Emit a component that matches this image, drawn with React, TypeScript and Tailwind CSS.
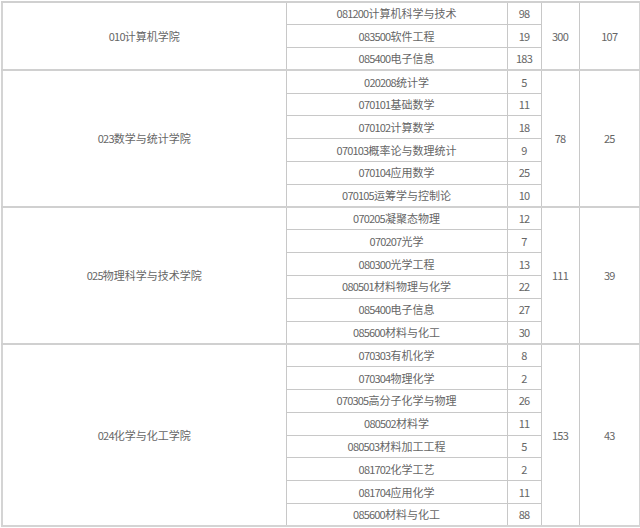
type Major = [string, string, number];

interface College {
  code: string;
  name: string;
  majors: Major[];
  total: number;
  extra: number;
}

const colleges: College[] = [
  {
    code: "010",
    name: "计算机学院",
    majors: [
      ["081200", "计算机科学与技术", 98],
      ["083500", "软件工程", 19],
      ["085400", "电子信息", 183],
    ],
    total: 300,
    extra: 107,
  },
  {
    code: "023",
    name: "数学与统计学院",
    majors: [
      ["020208", "统计学", 5],
      ["070101", "基础数学", 11],
      ["070102", "计算数学", 18],
      ["070103", "概率论与数理统计", 9],
      ["070104", "应用数学", 25],
      ["070105", "运筹学与控制论", 10],
    ],
    total: 78,
    extra: 25,
  },
  {
    code: "025",
    name: "物理科学与技术学院",
    majors: [
      ["070205", "凝聚态物理", 12],
      ["070207", "光学", 7],
      ["080300", "光学工程", 13],
      ["080501", "材料物理与化学", 22],
      ["085400", "电子信息", 27],
      ["085600", "材料与化工", 30],
    ],
    total: 111,
    extra: 39,
  },
  {
    code: "024",
    name: "化学与化工学院",
    majors: [
      ["070303", "有机化学", 8],
      ["070304", "物理化学", 2],
      ["070305", "高分子化学与物理", 26],
      ["080502", "材料学", 11],
      ["080503", "材料加工工程", 5],
      ["081702", "化学工艺", 2],
      ["081704", "应用化学", 11],
      ["085600", "材料与化工", 88],
    ],
    total: 153,
    extra: 43,
  },
];

const cell = "border border-[#c8c8c8] text-center align-middle p-0";
const groupTop = "border-t-2 border-t-[#d0d0d0]";

// digits in the source are narrower than Noto's
const Num = ({ v }: { v: string | number }) => (
  <span className="tracking-[-0.8px]">{v}</span>
);

export default function App() {
  return (
    <div className="w-[640px] h-[528px] overflow-hidden bg-white pl-px pt-px">
      <table
        className="table-fixed border-collapse border-2 border-[#d4d4d4] w-[638px] text-[11px] leading-none text-[#666666]"
        style={{ fontFamily: '"Noto Sans CJK SC", sans-serif' }}
      >
        <colgroup>
          <col className="w-[284px]" />
          <col className="w-[221px]" />
          <col className="w-[34px]" />
          <col className="w-[38px]" />
          <col className="w-[61px]" />
        </colgroup>
        <tbody>
          {colleges.map((c) =>
            c.majors.map(([code, major, n], i) => (
              <tr key={c.code + code + major} className="h-[22.8px]">
                {i === 0 && (
                  <td rowSpan={c.majors.length} className={`${cell} ${groupTop}`}>
                    <Num v={c.code} />
                    {c.name}
                  </td>
                )}
                <td className={`${cell} ${i === 0 ? groupTop : ""}`}>
                  <Num v={code} />
                  {major}
                </td>
                <td className={`${cell} ${i === 0 ? groupTop : ""}`}>
                  <Num v={n} />
                </td>
                {i === 0 && (
                  <>
                    <td rowSpan={c.majors.length} className={`${cell} ${groupTop}`}>
                      <Num v={c.total} />
                    </td>
                    <td rowSpan={c.majors.length} className={`${cell} ${groupTop}`}>
                      <Num v={c.extra} />
                    </td>
                  </>
                )}
              </tr>
            ))
          )}
        </tbody>
      </table>
    </div>
  );
}
